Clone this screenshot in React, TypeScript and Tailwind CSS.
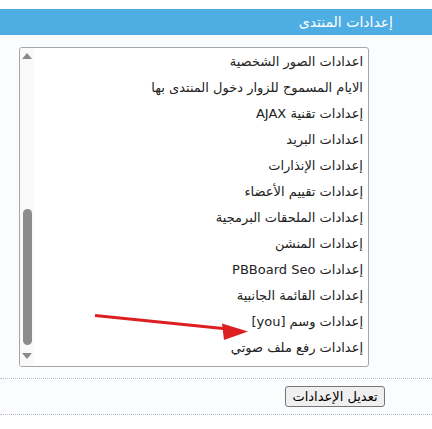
const items = [
  'اعدادات الصور الشخصية',
  'الايام المسموح للزوار دخول المنتدى بها',
  'إعدادات تقنية AJAX',
  'اعدادات البريد',
  'إعدادات الإنذارات',
  'إعدادات تقييم الأعضاء',
  'إعدادات الملحقات البرمجية',
  'إعدادات المنشن',
  'إعدادات PBBoard Seo',
  'إعدادات القائمة الجانبية',
  'إعدادات وسم [you]',
  'إعدادات رفع ملف صوتي',
];

export default function App() {
  return (
    <div dir="rtl" className="relative w-[432px] h-[429px] bg-white font-['DejaVu_Sans',sans-serif] text-[13px] text-[#222]">
      {/* section title */}
      <div className="mt-[9px] h-[26px] bg-[#4eade2] text-white text-[14px] flex items-center pr-[39px]">
        إعدادات المنتدى
      </div>

      <div className="bg-[#fafcfe]">
        {/* listbox */}
        <div className="pt-[12px] pb-[11px] pr-[63px]">
          <div className="w-[350px] h-[320px] bg-white border border-[#a6a6a6] rounded-[3px] flex overflow-hidden">
            <ul className="flex-1 pt-[1px] pr-[5px]">
              {items.map((t) => (
                <li key={t} className="h-[26px] leading-[26px] whitespace-nowrap">
                  {t}
                </li>
              ))}
            </ul>
            {/* scrollbar */}
            <div className="w-[14px] bg-[#f9f9f9] flex flex-col items-center">
              <svg width="10" height="6" viewBox="0 0 10 6" className="mt-[5px]">
                <path d="M5 0 L10 6 L0 6 Z" fill="#8a8a8a" />
              </svg>
              <div className="mt-[150px] w-[9px] h-[136px] rounded-full bg-[#8c8c8c]" />
              <svg width="10" height="6" viewBox="0 0 10 6" className="mt-[8px]">
                <path d="M0 0 L10 0 L5 6 Z" fill="#8a8a8a" />
              </svg>
            </div>
          </div>
        </div>

        {/* actions */}
        <div className="border-t border-b border-dotted border-[#bdbdbd] h-[37px] flex items-center pr-[47px]">
          <button className="h-[21px] w-[100px] bg-[#efefef] border border-[#767676] rounded-[3px] text-[13px] text-black leading-none">
            تعديل الإعدادات
          </button>
        </div>
      </div>

      {/* annotation arrow */}
      <svg className="absolute left-0 top-0 pointer-events-none" width="432" height="429">
        <line x1="95" y1="306.5" x2="228" y2="320" stroke="#dd1f22" strokeWidth="3.2" />
        <path d="M248 322.5 L222 314.5 L224 331 Z" fill="#dd1f22" />
      </svg>
    </div>
  );
}
